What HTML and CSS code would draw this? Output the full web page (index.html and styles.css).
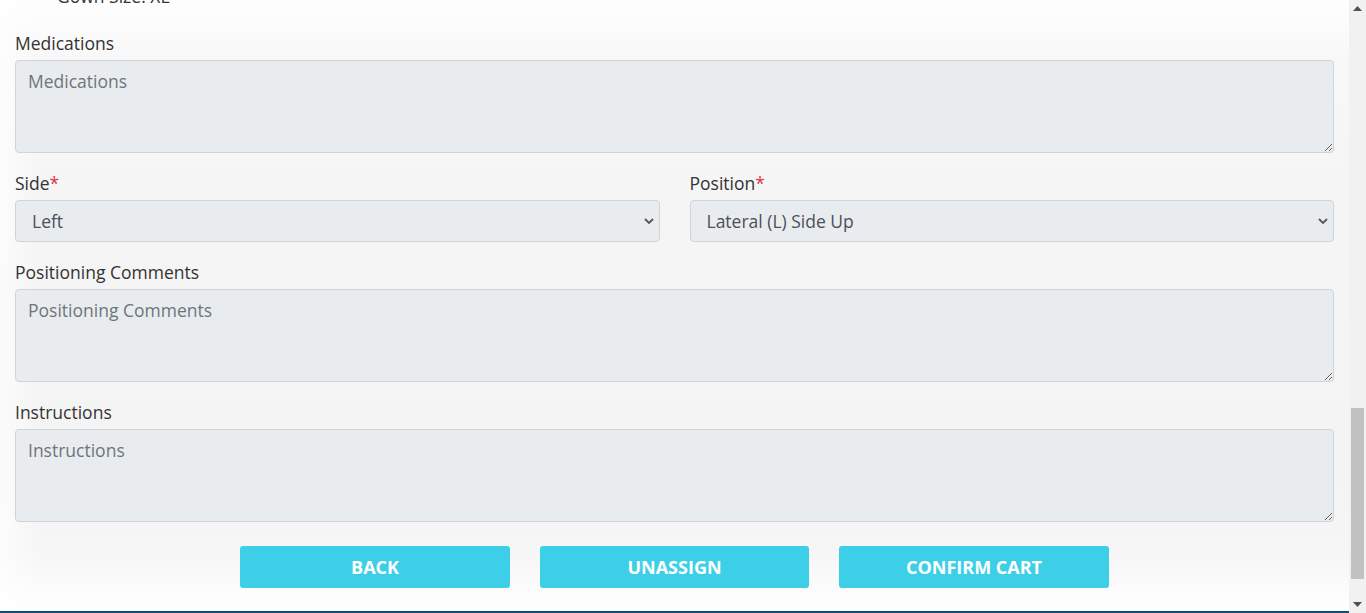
FILE: index.html
```html
<!DOCTYPE html>
<html lang="en">
<head>
<meta charset="utf-8">
<title>Cart</title>
<link rel="stylesheet" href="styles.css">
</head>
<body>
<div class="window">
  <div class="main">
    <div class="content">
      <div class="prev-item">Gown Size: XL</div>
      <form class="form">
        <div class="group">
          <label class="label">Medications</label>
          <textarea class="textarea" placeholder="Medications"></textarea>
        </div>
        <div class="row">
          <div class="group">
            <label class="label">Side<span class="req">*</span></label>
            <div class="select-wrap">
              <select class="select"><option>Left</option></select>
              <svg class="chevron" width="10" height="6" viewBox="0 0 10 6"><polyline points="1,1 5,5 9,1" fill="none" stroke="#555" stroke-width="1.8"/></svg>
            </div>
          </div>
          <div class="group">
            <label class="label">Position<span class="req">*</span></label>
            <div class="select-wrap">
              <select class="select"><option>Lateral (L) Side Up</option></select>
              <svg class="chevron" width="10" height="6" viewBox="0 0 10 6"><polyline points="1,1 5,5 9,1" fill="none" stroke="#555" stroke-width="1.8"/></svg>
            </div>
          </div>
        </div>
        <div class="group">
          <label class="label">Positioning Comments</label>
          <textarea class="textarea" placeholder="Positioning Comments"></textarea>
        </div>
        <div class="group">
          <label class="label">Instructions</label>
          <textarea class="textarea" placeholder="Instructions"></textarea>
        </div>
        <div class="actions">
          <button type="button" class="btn">BACK</button>
          <button type="button" class="btn btn-mid">UNASSIGN</button>
          <button type="button" class="btn">CONFIRM CART</button>
        </div>
      </form>
    </div>
    <div class="footer-line"></div>
  </div>
  <div class="scrollbar">
    <div class="sb-btn"><svg width="9" height="5" viewBox="0 0 9 5"><polygon points="0,5 4.5,0 9,5" fill="#505050"/></svg></div>
    <div class="sb-track"><div class="sb-thumb"></div></div>
    <div class="sb-btn"><svg width="9" height="5" viewBox="0 0 9 5"><polygon points="0,0 9,0 4.5,5" fill="#505050"/></svg></div>
  </div>
</div>
</body>
</html>
```
FILE: styles.css
```css
html, body {
  margin: 0;
  padding: 0;
  height: 100%;
  overflow: hidden;
}
body {
  font-family: "Open Sans", "Noto Sans", sans-serif;
  font-size: 17.5px;
  color: #333;
  background: #fff;
}
.window {
  display: flex;
  height: 613px;
  width: 1366px;
}
.main {
  flex: 1;
  display: flex;
  flex-direction: column;
  min-width: 0;
}
.content {
  flex: 1;
  overflow: hidden;
  padding: 0 15px;
  background:
    linear-gradient(to right, rgba(255,255,255,0.7) 0, rgba(255,255,255,0) 40px),
    linear-gradient(to bottom, #fefefe 0, #f8f8f8 60px, #f5f5f5 200px, #f4f4f4 480px, #f6f6f6 550px, #fefefe 605px);
}
.prev-item {
  margin-top: -17px;
  padding-left: 42px;
  line-height: 27px;
  color: #333;
}
.form {
  margin-top: 19px;
  display: flex;
  flex-direction: column;
  gap: 16px;
}
.group {
  display: flex;
  flex-direction: column;
  flex: 1;
  min-width: 0;
}
.label {
  line-height: 27px;
  padding-top: 1px;
  margin-bottom: 3px;
  color: #333;
}
.req {
  color: #dc3545;
}
.textarea {
  box-sizing: border-box;
  height: 93px;
  padding: 7px 12px 5px;
  font-family: inherit;
  font-size: 17.5px;
  line-height: 27px;
  background: #e9ecef;
  border: 1px solid #ced4da;
  border-radius: 4px;
  color: #495057;
  resize: vertical;
  outline: none;
}
.textarea::placeholder {
  color: #6c757d;
  opacity: 1;
}
.row {
  display: flex;
  gap: 30px;
}
.select-wrap {
  position: relative;
}
.select {
  appearance: none;
  -webkit-appearance: none;
  box-sizing: border-box;
  width: 100%;
  height: 42px;
  padding: 0 30px 0 16px;
  font-family: inherit;
  font-size: 17.5px;
  background: #e9ecef;
  border: 1px solid #ced4da;
  border-radius: 4px;
  color: #495057;
  outline: none;
}
.chevron {
  position: absolute;
  right: 6px;
  top: 18px;
}
.actions {
  display: flex;
  justify-content: center;
  gap: 30px;
  margin-top: 8px;
}
.btn {
  width: 270px;
  height: 42px;
  border: none;
  border-radius: 3px;
  background: #3ecfe8;
  color: #fff;
  font-family: "Open Sans", "Noto Sans", sans-serif;
  font-weight: 700;
  font-size: 18px;
  cursor: pointer;
}
.btn-mid {
  width: 269px;
}
.footer-line {
  height: 2px;
  background: #0d4f78;
}
.scrollbar {
  width: 17px;
  display: flex;
  flex-direction: column;
  background: #f1f1f1;
}
.sb-btn {
  height: 17px;
  display: flex;
  align-items: center;
  justify-content: center;
}
.sb-track {
  flex: 1;
  display: flex;
  flex-direction: column;
  align-items: center;
}
.sb-thumb {
  margin-top: 391px;
  width: 13px;
  height: 171px;
  background: #c1c1c1;
}
```
